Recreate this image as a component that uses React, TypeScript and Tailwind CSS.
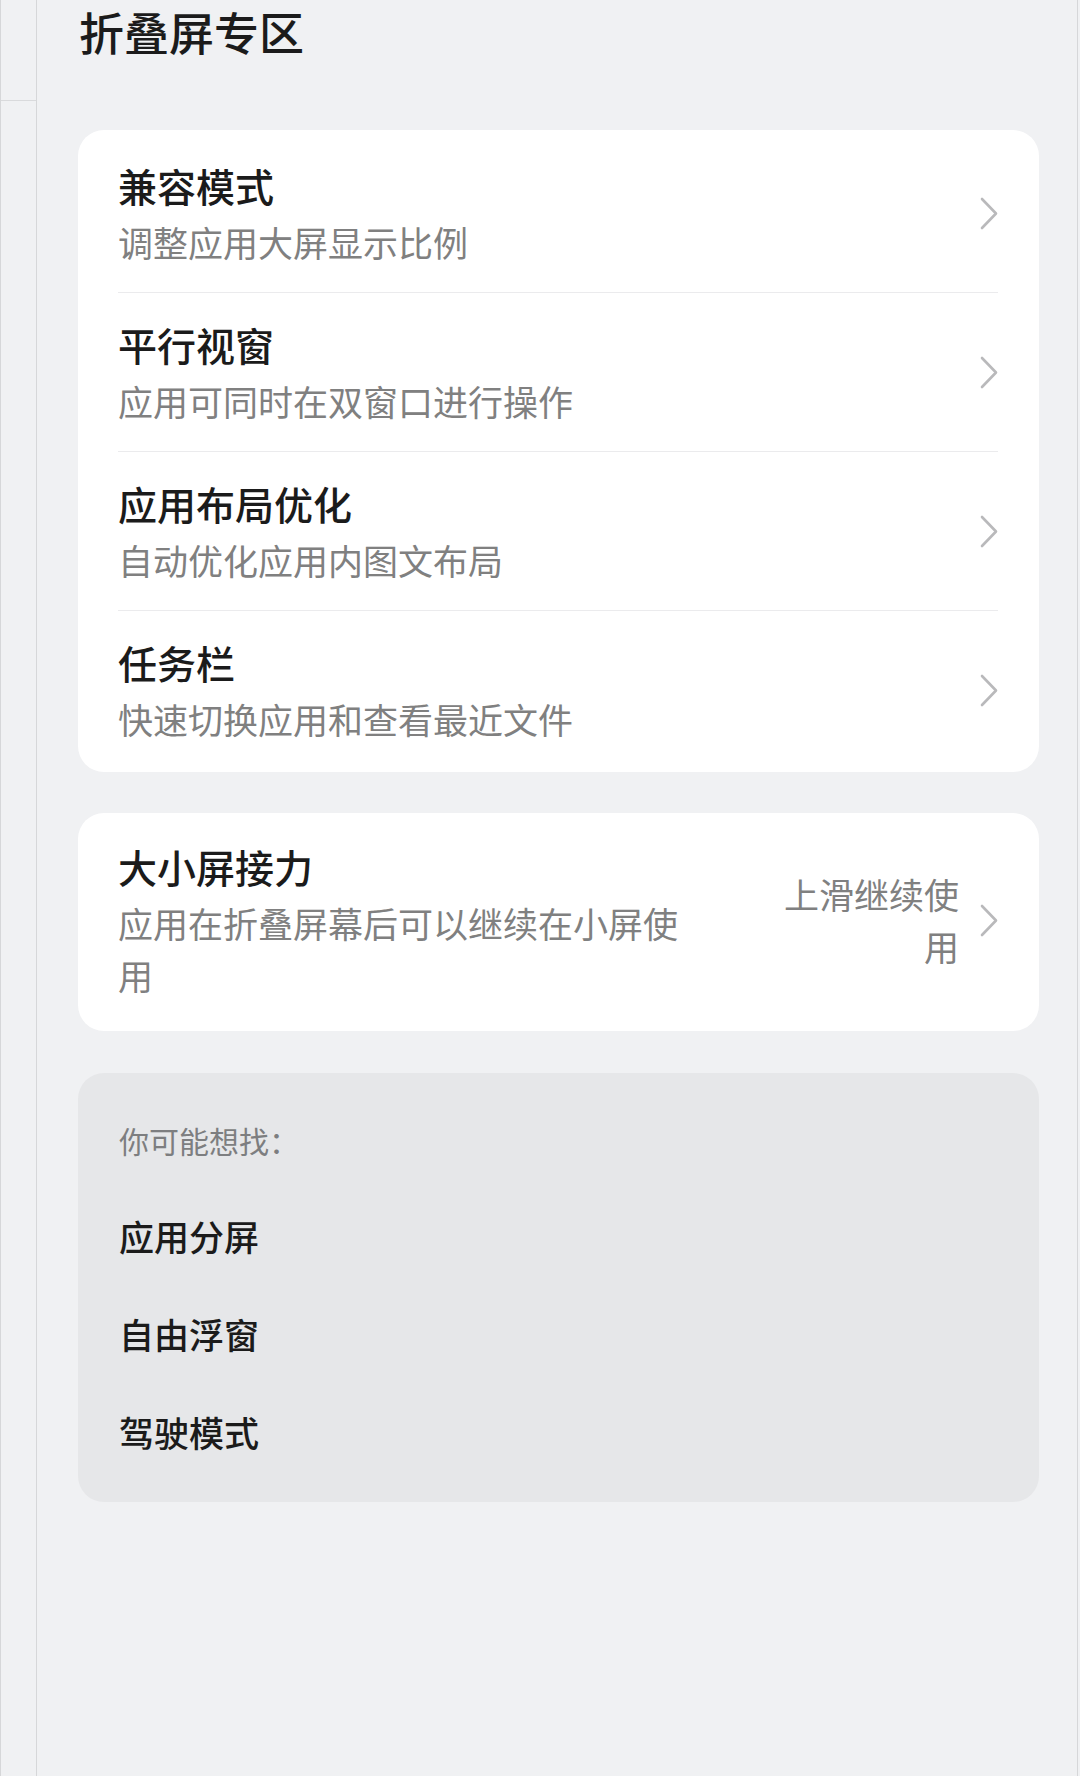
import React from "react";

const FONT = { fontFamily: '"Noto Sans CJK SC", "Noto Sans", sans-serif' };

const FOLD_ITEMS = [
  { title: "兼容模式", desc: "调整应用大屏显示比例" },
  { title: "平行视窗", desc: "应用可同时在双窗口进行操作" },
  { title: "应用布局优化", desc: "自动优化应用内图文布局" },
  { title: "任务栏", desc: "快速切换应用和查看最近文件" },
];

const SUGGESTIONS = ["应用分屏", "自由浮窗", "驾驶模式"];

const Chevron = () => (
  <svg width="18" height="33" viewBox="0 0 18 33" fill="none" className="shrink-0">
    <path d="M2 2 L16 16.5 L2 31" stroke="#b9b9bb" strokeWidth="2.6" strokeLinecap="round" strokeLinejoin="round" />
  </svg>
);

export default function App() {
  return (
    <div style={FONT} className="flex w-[1080px] min-h-[1776px] bg-[#f0f1f3]">
      {/* cut-off left pane */}
      <div className="w-[37px] shrink-0 border-l border-r border-[#d6d7d9]">
        <div className="h-[101px] border-b border-[#d9dadc]" />
      </div>

      <main className="flex-1 pl-[41px] pr-[38px] pt-[4px]">
        <h1 className="ml-[1px] text-[45px] leading-[56px] font-medium text-[#1b1b1b]">折叠屏专区</h1>

        {/* foldable settings list */}
        <section className="mt-[70px] rounded-[26px] bg-white pt-[4px] pb-[3px]">
          {FOLD_ITEMS.map((item, i) => (
            <div
              key={item.title}
              className={
                "ml-[40px] mr-[41px] flex items-center " +
                (i < FOLD_ITEMS.length - 1 ? "border-b border-[#ebebed]" : "")
              }
            >
              <div className="flex-1 pt-[25px] pb-[24px]">
                <div className="text-[39px] leading-[52px] font-medium text-[#1b1b1b]">{item.title}</div>
                <div className="mt-[5px] text-[35px] leading-[52px] text-[#808080]">{item.desc}</div>
              </div>
              <Chevron />
            </div>
          ))}
        </section>

        {/* continuity card */}
        <section className="mt-[41px] rounded-[26px] bg-white pt-[2px] pb-[6px]">
          <div className="ml-[40px] mr-[41px] flex items-center">
            <div className="w-[582px] pt-[25px] pb-[24px]">
              <div className="text-[39px] leading-[52px] font-medium text-[#1b1b1b]">大小屏接力</div>
              <div className="mt-[5px] text-[35px] leading-[52px] text-[#808080]">
                应用在折叠屏幕后可以继续在小屏使用
              </div>
            </div>
            <div className="ml-auto w-[182px] text-right text-[35px] leading-[52px] text-[#808080]">
              上滑继续使用
            </div>
            <div className="ml-[21px]">
              <Chevron />
            </div>
          </div>
        </section>

        {/* suggestions */}
        <section className="mt-[42px] rounded-[26px] bg-[#e6e7e9] pl-[41px] pt-[47px] pb-[46px]">
          <div className="text-[30px] leading-[40px] text-[#7d7e80]">你可能想找：</div>
          <div className="mt-[52px] flex flex-col gap-[50px]">
            {SUGGESTIONS.map((s) => (
              <div key={s} className="text-[35px] leading-[48px] font-medium text-[#1b1b1b]">
                {s}
              </div>
            ))}
          </div>
        </section>
      </main>

      <div className="w-[3px] shrink-0 border-l border-[#d6d7d9]" />
    </div>
  );
}
